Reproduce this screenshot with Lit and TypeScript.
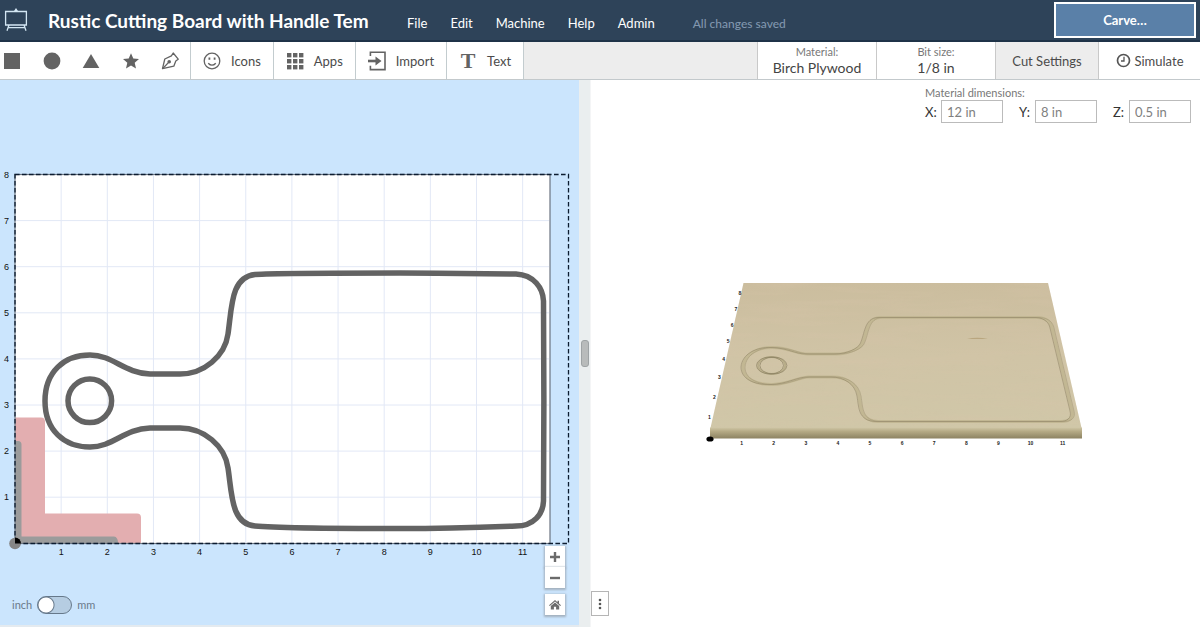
import { LitElement, html, css, svg } from "lit";
import { customElement, property, state } from "lit/decorators.js";

const range = (n: number) => Array.from({ length: n }, (_, i) => i + 1);

const OUTLINE =
  "M45 401C45 372 64 355 90 355C113 355 124 373 150 374L180 374" +
  "C204 374 225 356 228 334C232 306 231 277 255 274.5C275 273 310 273 400 273" +
  "C440 273 490 274 516 274C534 275 543 288 543.5 301C544 350 544 452 543.5 501" +
  "C543 514 534 526 516 526C490 527 440 528.5 400 528.5C310 528.5 275 528 255 526" +
  "C231 524 232 494 228 468C225 446 204 428 180 428L150 428C124 429 113 447 90 447" +
  "C64 447 45 430 45 401Z";

const GROOVE =
  "M743 367C744 354 758 347 773 347.5C790 348 797 354 808 354L836 354" +
  "C850 354 860 348 862 344C867 334 866 318 880 317.5L1038 317.5" +
  "C1047 318 1051 323 1052 328L1072 411C1074 418 1069 421.5 1062 421.5" +
  "L878 421.5C860 421 861 408 859 396C857 384 846 377 833 377L808 377" +
  "C797 378 788 384 773 384.5C756 385 743 379 743 367Z";

@customElement("design-canvas")
export class DesignCanvas extends LitElement {
  static styles = css`
    :host {
      display: block;
      min-width: 0;
      min-height: 0;
    }
    .canvas {
      display: block;
      width: 100%;
      height: 100%;
    }
    .tick {
      font: 9px "Liberation Sans", Arial, sans-serif;
      fill: #111;
      text-anchor: middle;
    }
    .grid {
      stroke: #e2e8f6;
      stroke-width: 1;
    }
    .cut {
      fill: none;
      stroke: #636363;
      stroke-width: 5.5;
    }
    .bed {
      fill: none;
      stroke: #0c1c30;
      stroke-width: 1.3;
      stroke-dasharray: 4.6 2.4;
    }
  `;

  render() {
    return html`<svg
      class="canvas"
      viewBox="0 80 579 545"
      preserveAspectRatio="xMinYMid meet"
      role="img"
      aria-label="Design canvas"
    >
      <rect x="15" y="174.5" width="535" height="369" fill="#fff"></rect>
      ${range(11).map((n) => svg`<line class="grid" x1=${15 + n * 46.15} x2=${15 + n * 46.15} y1="175" y2="543"></line>`)}
      ${range(7).map((n) => svg`<line class="grid" x1="15" x2="549" y1=${543.3 - n * 46.1} y2=${543.3 - n * 46.1}></line>`)}
      <path d="M15 417.5H41Q45 417.5 45 421.5V513.5H137Q141 513.5 141 517.5V543H15Z" fill="#e3aeb0"></path>
      <path d="M15 441H18Q21.5 441 21.5 444.5V536.5H114Q118 537 118 543H15Z" fill="#9b9b9b"></path>
      <rect x="15" y="174.5" width="535" height="369" fill="none" stroke="#6b7480" stroke-width="1.2"></rect>
      <rect class="bed" x="15" y="174.5" width="553.5" height="369"></rect>
      <path class="cut" d=${OUTLINE}></path>
      <circle class="cut" cx="89.8" cy="400.8" r="21.8"></circle>
      <circle cx="15" cy="543.5" r="5.8" fill="#858585"></circle>
      <path d="M15 537.5A6 6 0 0 1 21 543.5H15Z" fill="#000"></path>
      ${range(11).map((n) => svg`<text class="tick" x=${15 + n * 46.15} y="555">${n}</text>`)}
      ${range(8).map((n) => svg`<text class="tick" x="6.5" y=${546.5 - n * 46.1}>${n}</text>`)}
    </svg>`;
  }
}

@customElement("board-preview")
export class BoardPreview extends LitElement {
  static styles = css`
    :host {
      display: block;
      min-width: 0;
      min-height: 0;
    }
    .scene {
      display: block;
      width: 100%;
      height: 100%;
    }
    .mark {
      font: bold 5px "Liberation Sans", Arial, sans-serif;
      fill: #222;
      text-anchor: middle;
    }
  `;

  private depth = [417, 397, 377, 359, 341, 325, 309, 293];

  render() {
    return html`<svg
      class="scene"
      viewBox="591 80 609 547"
      preserveAspectRatio="xMidYMid meet"
      role="img"
      aria-label="Carve preview"
    >
      <defs>
        <linearGradient id="face" x1="0" y1="0" x2="0" y2="1">
          <stop offset="0" stop-color="#cbbd9e"></stop>
          <stop offset="0.5" stop-color="#d0c4a6"></stop>
          <stop offset="1" stop-color="#d0c7a8"></stop>
        </linearGradient>
        <linearGradient id="front" x1="0" y1="0" x2="0" y2="1">
          <stop offset="0" stop-color="#cec5a5"></stop>
          <stop offset="0.35" stop-color="#b5aa85"></stop>
          <stop offset="1" stop-color="#8c8262"></stop>
        </linearGradient>
        <filter id="grain" x="0" y="0" width="1" height="1">
          <feTurbulence type="fractalNoise" baseFrequency="0.012 0.12" numOctaves="3" seed="7"></feTurbulence>
          <feColorMatrix values="0 0 0 0 0.68  0 0 0 0 0.55  0 0 0 0 0.4  1.6 0 0 0 -0.7"></feColorMatrix>
          <feComposite in2="SourceGraphic" operator="in"></feComposite>
        </filter>
      </defs>
      <path d="M743.5 283H1048L1082 430H710Z" fill="url(#face)"></path>
      <path d="M743.5 283H1048L1082 430H710Z" filter="url(#grain)" opacity="0.5"></path>
      <path d="M710 427.5H1082V438.5H710Z" fill="url(#front)"></path>
      <g fill="none">
        <path d=${GROOVE} stroke="#c2b793" stroke-width="3"></path>
        <path d=${GROOVE} stroke="#877c5e" stroke-width="1" transform="translate(-2 0)" opacity="0.5"></path>
        <path d=${GROOVE} stroke="#9d9272" stroke-width="1" transform="translate(2 0)" opacity="0.5"></path>
        <ellipse cx="771.7" cy="365.5" rx="13.5" ry="8.5" stroke="#b8ad89" stroke-width="2"></ellipse>
        <ellipse cx="770" cy="365.5" rx="13.5" ry="8.5" stroke="#83795b" opacity="0.6"></ellipse>
        <ellipse cx="773.4" cy="365.5" rx="13.5" ry="8.5" stroke="#83795b" opacity="0.6"></ellipse>
      </g>
      <path d="M967 338.5Q977 337 988 338.5Q977 339.5 967 338.5Z" fill="#b9a67f"></path>
      <ellipse cx="710" cy="439" rx="3.6" ry="2.6" fill="#000"></ellipse>
      ${range(11).map((n) => svg`<text class="mark" x=${709.5 + n * 32.1} y="445">${n}</text>`)}
      ${this.depth.map((y, i) => svg`<text class="mark" x=${709.5 + (417 - y) * 0.245} y=${y + 2}>${i + 1}</text>`)}
    </svg>`;
  }
}

@customElement("app-root")
export class AppRoot extends LitElement {
  static styles = css`
    :host {
      display: flex;
      flex-direction: column;
      height: 100vh;
      font: 13px/16px Lato, "Open Sans", sans-serif;
      color: #4b4b4b;
      background: #fff;
    }
    * {
      box-sizing: border-box;
    }
    button,
    input {
      font: inherit;
      color: inherit;
      margin: 0;
      border-radius: 0;
    }
    button {
      background: none;
      border: 0;
      padding: 0;
      cursor: pointer;
    }
    svg {
      display: block;
      flex: none;
    }
    .header {
      display: flex;
      align-items: center;
      flex: none;
      height: 42px;
      padding: 0 4px;
      background: #2e4359;
      border-bottom: 2px solid #1f3348;
      color: #fff;
    }
    .title {
      width: 340px;
      margin-left: 19px;
      padding: 2px 0 0;
      border: 0;
      background: none;
      color: #fff;
      font-size: 19px;
      line-height: 24px;
      font-weight: 700;
      outline: 0;
    }
    .menu {
      display: flex;
      gap: 23px;
      margin-left: 19px;
      padding-top: 6px;
      font-weight: 400;
    }
    .menu a {
      color: #fff;
      text-decoration: none;
    }
    .status {
      margin-left: 38px;
      padding-top: 8px;
      color: #8096ae;
      font-size: 12px;
      font-weight: 500;
    }
    .carve {
      width: 142px;
      height: 36px;
      margin-left: auto;
      border: 2px solid #fff;
      background: #5a80a8;
      color: #fff;
      font-weight: 700;
    }
    .toolbar {
      display: flex;
      flex: none;
      height: 38px;
      background: #ededed;
      border-bottom: 1px solid #c3c9cc;
    }
    .shapes {
      display: flex;
      align-items: center;
      justify-content: space-between;
      width: 191px;
      padding: 0 11px 0 3px;
      background: #fff;
      border-right: 1px solid #c3cccf;
    }
    .tool {
      display: flex;
      align-items: center;
      gap: 10px;
      padding: 0 12px;
      background: #fff;
      border-right: 1px solid #c3cccf;
    }
    .serif {
      width: 18px;
      font: bold 22px/22px "Liberation Serif", serif;
      color: #636363;
    }
    .spacer {
      flex: 1;
    }
    .setting {
      display: flex;
      flex-direction: column;
      align-items: center;
      justify-content: center;
      width: 119px;
      background: #fff;
      border-left: 1px solid #c9c9c9;
    }
    .caption {
      font-size: 11px;
      line-height: 14px;
      color: #777;
    }
    .value {
      font-size: 14px;
      line-height: 18px;
      color: #444;
    }
    .action {
      display: flex;
      align-items: center;
      justify-content: center;
      gap: 4px;
      width: 103px;
      border-left: 1px solid #c9c9c9;
    }
    .white {
      width: 102px;
      background: #fff;
    }
    .workspace {
      display: grid;
      flex: 1;
      min-height: 0;
      grid-template-columns: 579fr 12px 609fr;
      grid-template-rows: minmax(0, 1fr);
    }
    .pane {
      position: relative;
      display: grid;
      grid-template-rows: minmax(0, 1fr);
      grid-template-columns: minmax(0, 1fr);
      min-width: 0;
    }
    .design {
      background: #cbe5fd;
      border-bottom: 2px solid #e4eaef;
    }
    .units {
      position: absolute;
      left: 12px;
      bottom: 11px;
      display: flex;
      align-items: center;
      gap: 5px;
      font-size: 11px;
      color: #6a7a8a;
    }
    .toggle {
      appearance: none;
      width: 35px;
      height: 18px;
      border: 1px solid #66788a;
      border-radius: 9px;
      background: radial-gradient(circle at 8px 8px, #fff 7px, #66788a 8px, #b6cde2 9px);
    }
    .toggle:checked {
      background: radial-gradient(circle at 25px 8px, #fff 7px, #66788a 8px, #b6cde2 9px);
    }
    .zoom {
      position: absolute;
      right: 14px;
      bottom: 10px;
      display: flex;
      flex-direction: column;
    }
    .zoom button {
      display: grid;
      place-items: center;
      width: 20px;
      height: 21px;
      background: #fff;
      box-shadow: 0 1px 2px 1px #a3b1bf;
    }
    .zoom button:last-child {
      margin-top: 6px;
    }
    .divider {
      display: grid;
      place-items: center;
      background: #eaeeef;
      border-right: 1px solid #f4f5f6;
    }
    .grip {
      width: 8px;
      height: 27px;
      border: 1px solid #9ea3a5;
      border-radius: 3px;
      background: #b8bbbb;
    }
    .pane > * {
      grid-area: 1 / 1;
    }
    .dimensions {
      justify-self: end;
      align-self: start;
      margin: 0;
      padding: 6px 9px 0 0;
      border: 0;
      z-index: 1;
    }
    .fields {
      display: flex;
      gap: 16px;
    }
    .field {
      display: flex;
      align-items: center;
    }
    .field span {
      width: 16px;
      color: #333;
    }
    .field input {
      width: 62px;
      height: 23px;
      padding: 0 5px;
      border: 1px solid #bbb;
      background: #fff;
      color: #808080;
    }
    .more {
      position: absolute;
      left: 0;
      bottom: 11px;
      display: grid;
      place-items: center;
      width: 18px;
      height: 25px;
      border: 1px solid #b5b5b5;
      background: #fff;
    }
  `;

  @property() project = "Rustic Cutting Board with Handle Tem";
  @state() private metric = false;

  private menu = ["File", "Edit", "Machine", "Help", "Admin"];
  private dims = [
    ["X", "12 in"],
    ["Y", "8 in"],
    ["Z", "0.5 in"],
  ];
  private shapes = [
    { name: "Rectangle", art: svg`<rect x="1" y="1" width="16" height="16" fill="#636363"></rect>` },
    { name: "Ellipse", art: svg`<circle cx="9" cy="9" r="8.4" fill="#636363"></circle>` },
    { name: "Triangle", art: svg`<path d="M9 2L17.3 16H.7Z" fill="#636363"></path>` },
    {
      name: "Star",
      art: svg`<path d="M9 1.2L11.3 6.5L17 7L12.7 10.8L14 16.5L9 13.4L4 16.5L5.3 10.8L1 7L6.7 6.5Z" fill="#636363"></path>`,
    },
    {
      name: "Pen",
      art: svg`<g fill="none" stroke="#636363" stroke-width="1.3" stroke-linejoin="round">
        <path d="M1.5 16.6L3.8 7L10.4 3.8L12.2 1L17.2 7.2L14.8 9L12.8 14.2Z"></path>
        <path d="M2 16.2L7.4 10.6"></path></g><circle cx="8.2" cy="9.8" r="1.8" fill="#636363"></circle>`,
    },
  ];

  render() {
    return html`
      <header class="header">
        <svg width="25" height="28" viewBox="0 0 25 28" fill="none" stroke="#d3e6f3" stroke-width="1.3">
          <path d="M1.6 5.5H22.4V19H1.6ZM4.5 21.6H20.5M5 19L3 24.8M20 19L22 24.8"></path>
          <path d="M10 5L12 2L14 5Z" fill="#d3e6f3" stroke="none"></path>
        </svg>
        <input class="title" aria-label="Project name" .value=${this.project} />
        <nav class="menu">${this.menu.map((m) => html`<a href="#">${m}</a>`)}</nav>
        <span class="status">All changes saved</span>
        <button class="carve">Carve…</button>
      </header>

      <div class="toolbar">
        <div class="shapes">
          ${this.shapes.map(
            (s) => html`<button aria-label=${s.name}><svg width="18" height="18" viewBox="0 0 18 18">${s.art}</svg></button>`
          )}
        </div>
        <button class="tool">
          <svg width="18" height="18" viewBox="0 0 18 18" fill="none" stroke="#636363" stroke-width="1.3">
            <circle cx="9" cy="9" r="7.8"></circle>
            <path d="M5.2 11.2Q9 15.2 12.8 11.2"></path>
            <path d="M6.4 5.4V7.8M11.6 5.4V7.8" stroke-width="1.8"></path>
          </svg>
          Icons
        </button>
        <button class="tool">
          <svg width="18" height="18" viewBox="0 0 18 18" fill="#636363">
            ${[1, 7, 13].map((y) => [1, 7, 13].map((x) => svg`<rect x=${x} y=${y} width="4.4" height="4.4"></rect>`))}
          </svg>
          Apps
        </button>
        <button class="tool">
          <svg width="18" height="20" viewBox="0 0 18 20" fill="none" stroke="#636363" stroke-width="1.6">
            <path d="M2.4 5V1.2H17V18.6H2.4V14.8"></path>
            <path d="M0 10H8" stroke-width="2.6"></path>
            <path d="M7.5 5.5L13.5 10L7.5 14.5Z" fill="#636363" stroke="none"></path>
          </svg>
          Import
        </button>
        <button class="tool"><span class="serif" aria-hidden="true">T</span>Text</button>
        <div class="spacer"></div>
        <button class="setting"><span class="caption">Material:</span><span class="value">Birch Plywood</span></button>
        <button class="setting"><span class="caption">Bit size:</span><span class="value">1/8 in</span></button>
        <button class="action">Cut Settings</button>
        <button class="action white">
          <svg width="15" height="15" viewBox="0 0 15 15" fill="none" stroke="#555">
            <circle cx="7.5" cy="7.5" r="6" stroke-width="1.7"></circle>
            <path d="M8 3.8V8H5" stroke-width="1.3"></path>
          </svg>
          Simulate
        </button>
      </div>

      <main class="workspace">
        <section class="pane design">
          <design-canvas></design-canvas>
          <label class="units">
            inch
            <input
              class="toggle"
              type="checkbox"
              .checked=${this.metric}
              @change=${(e: Event) => (this.metric = (e.target as HTMLInputElement).checked)}
            />
            mm
          </label>
          <div class="zoom">
            <button aria-label="Zoom in">
              <svg width="10" height="10" viewBox="0 0 10 10" stroke="#6b6b6b" stroke-width="2.4"><path d="M0 5H10M5 0V10"></path></svg>
            </button>
            <button aria-label="Zoom out">
              <svg width="10" height="10" viewBox="0 0 10 10" stroke="#6b6b6b" stroke-width="2.4"><path d="M0 5H10"></path></svg>
            </button>
            <button aria-label="Reset view">
              <svg width="12" height="10" viewBox="0 0 12 10" fill="#6b6b6b">
                <path d="M6 0L0 5.2L.8 6L6 1.6L11.2 6L12 5.2L10 3.5V.8H8.5V2.2Z"></path>
                <path d="M6 2.5L1.8 6V9.6H4.9V6.8H7.1V9.6H10.2V6Z"></path>
              </svg>
            </button>
          </div>
        </section>
        <div class="divider"><div class="grip"></div></div>
        <section class="pane">
          <board-preview></board-preview>
          <fieldset class="dimensions">
            <div class="caption">Material dimensions:</div>
            <div class="fields">
              ${this.dims.map(
                ([axis, size]) => html`<label class="field"><span>${axis}:</span><input type="text" .value=${size} /></label>`
              )}
            </div>
          </fieldset>
          <button class="more" aria-label="More options">
            <svg width="4" height="12" viewBox="0 0 4 12" fill="#555">
              <circle cx="2" cy="2" r="1.3"></circle><circle cx="2" cy="6" r="1.3"></circle><circle cx="2" cy="10" r="1.3"></circle>
            </svg>
          </button>
        </section>
      </main>
    `;
  }
}
